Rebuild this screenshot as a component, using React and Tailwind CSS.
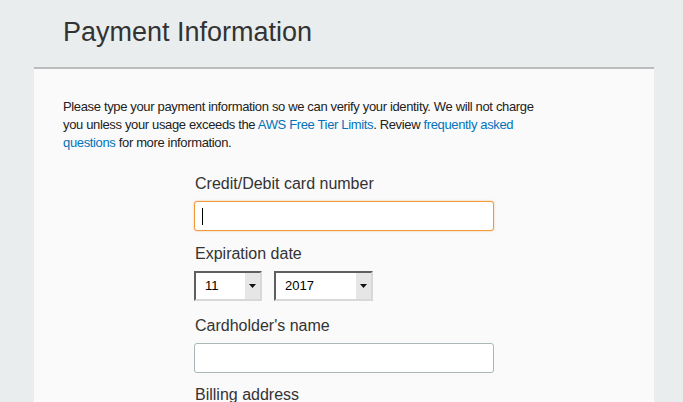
export default function App() {
  return (
    <div className="min-h-screen bg-[#e9edee] font-['Liberation_Sans',Arial,sans-serif] text-[#333]">
      {/* HEADER */}
      <div className="h-[67px] pl-[63px] pt-[15px]">
        <h1 className="text-[27px] leading-[34px] font-light text-[#333]">Payment Information</h1>
      </div>

      {/* CARD */}
      <div className="mx-[34px] w-[620px] border-t-2 border-[#bcbcbc] bg-[#fafafa] pl-[29px] pr-[20px] pt-[29px] pb-6">
        <p className="w-[482px] text-[13px] leading-[18px] tracking-[-0.35px] text-[#222]">
          Please type your payment information so we can verify your identity. We will not charge
          you unless your usage exceeds the{" "}
          <a href="#" className="text-[#0073bb]">AWS Free Tier Limits</a>. Review{" "}
          <a href="#" className="text-[#0073bb]">frequently asked questions</a> for more information.
        </p>

        <div className="ml-[131px] mt-[22px] w-[300px]">
          {/* CARD NUMBER */}
          <label className="block pl-px text-[16px] leading-[20px] text-[#333]">Credit/Debit card number</label>
          <div className="mt-[7px] flex h-[30px] items-center rounded-[3px] border border-[#f09a3a] bg-white pl-[7px] shadow-[0_0_2px_rgba(240,154,58,0.6)]">
            <span className="h-[17px] w-px bg-black"></span>
          </div>

          {/* EXPIRATION */}
          <label className="mt-[13px] block pl-px text-[16px] leading-[20px] text-[#333]">Expiration date</label>
          <div className="mt-[7px] flex gap-[12px]">
            <Select value="11" width="w-[68px]" />
            <Select value="2017" width="w-[99px]" />
          </div>

          {/* CARDHOLDER */}
          <label className="mt-[15px] block pl-px text-[16px] leading-[20px] text-[#333]">Cardholder's name</label>
          <div className="mt-[7px] h-[30px] rounded-[3px] border border-[#aab7b8] bg-white"></div>

          {/* BILLING */}
          <label className="mt-[12px] block pl-px text-[16px] leading-[20px] text-[#333]">Billing address</label>
        </div>
      </div>
    </div>
  );
}

function Select({ value, width }) {
  return (
    <div
      className={`${width} flex h-[30px] border-2 border-t-[#5f5f5f] border-l-[#5f5f5f] border-r-[#d8d8d8] border-b-[#d8d8d8] bg-white`}
    >
      <span className="flex-1 pl-[9px] text-[13px] leading-[26px] text-black">{value}</span>
      <span className="flex w-[15px] items-center justify-center bg-[#e6e6e6]">
        <svg width="7" height="4" viewBox="0 0 7 4">
          <path d="M0 0h7L3.5 4z" fill="#111" />
        </svg>
      </span>
    </div>
  );
}
